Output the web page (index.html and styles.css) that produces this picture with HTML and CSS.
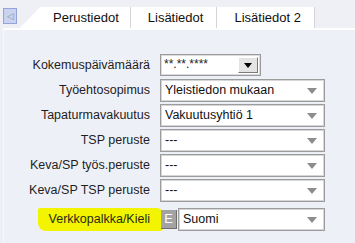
FILE: index.html
```html
<!DOCTYPE html>
<html lang="fi">
<head>
    <meta charset="UTF-8">
    <meta name="viewport" content="width=device-width, initial-scale=1.0">
    <title>Perustiedot</title>
    <link rel="stylesheet" href="styles.css">
</head>
<body>
    <div class="tab-bar">
        <div class="tab-prev">&#9665;</div>
        <div class="tab tab-first">Perustiedot</div>
        <div class="tab">Lisätiedot</div>
        <div class="tab">Lisätiedot 2</div>
    </div>

    <div class="panel">
        <div class="form-grid">
            <label>Kokemuspäivämäärä</label>
            <div class="date-input">
                <span>**.**.****</span>
                <span class="date-btn"><span class="black-arrow"></span></span>
            </div>

            <label>Työehtosopimus</label>
            <div class="select">Yleistiedon mukaan<span class="arrow"></span></div>

            <label>Tapaturmavakuutus</label>
            <div class="select">Vakuutusyhtiö 1<span class="arrow"></span></div>

            <label>TSP peruste</label>
            <div class="select">---<span class="arrow"></span></div>

            <label>Keva/SP työs.peruste</label>
            <div class="select">---<span class="arrow"></span></div>

            <label>Keva/SP TSP peruste</label>
            <div class="select">---<span class="arrow"></span></div>

            <label class="marked"><span class="highlight">Verkkopalkka/Kieli</span></label>
            <div class="control-pair">
                <span class="e-btn">E</span>
                <div class="select select-short">Suomi<span class="arrow"></span></div>
            </div>
        </div>
    </div>
</body>
</html>
```

FILE: styles.css
```css
body {
    margin: 0;
    background-color: #eef0f8;
    font-family: "Liberation Sans", Arial, sans-serif;
    font-size: 12.5px;
    color: #1e1e1e;
}

/* Välilehdet */
.tab-bar {
    display: flex;
    align-items: flex-end;
    height: 28px;
    padding-left: 3px;
    background-color: #eef0f6;
}

.tab-prev {
    width: 12px;
    height: 14px;
    margin-bottom: 4px;
    border: 1px solid #95a4d6;
    background-color: #c9d3f0;
    color: #8a8fa0;
    font-size: 9px;
    line-height: 14px;
    text-align: center;
}

.tab {
    height: 21px;
    line-height: 21px;
    padding: 0 13px 0 17px;
    background-color: #fff;
    border-right: 1px solid #d3d5da;
    color: #111;
    font-size: 13px;
}

.tab-first {
    margin-left: 3px;
    padding-left: 33px;
    padding-right: 11px;
    clip-path: polygon(0 100%, 20px 0, 100% 0, 100% 100%);
    border-right: 1px solid #c8c8c8;
}

/* Lomake */
.panel {
    border-top: 2px solid #fff;
    border-left: 1px solid #f7f8fc;
    margin-left: 3px;
    padding-top: 24px;
    height: 189px;
}

.form-grid {
    display: grid;
    grid-template-columns: 146px 165px;
    column-gap: 10px;
    row-gap: 2px;
}

.form-grid label {
    text-align: right;
    align-self: center;
    line-height: 23px;
}

.date-input {
    position: relative;
    width: 96px;
    height: 20px;
    border: 1px solid #9a9a9a;
    box-shadow: inset 0 0 0 1px #dcdcdc;
    background-color: #fff;
    padding-left: 3px;
    font-size: 12px;
    line-height: 18px;
    color: #222;
}

.date-btn {
    position: absolute;
    right: 2px;
    top: 2px;
    width: 18px;
    height: 14px;
    background-color: #e4e4e4;
    border: 1px solid;
    border-color: #fff #7a7a7a #7a7a7a #fff;
}

.black-arrow {
    position: absolute;
    left: 5px;
    top: 5px;
    border-left: 4px solid transparent;
    border-right: 4px solid transparent;
    border-top: 5px solid #000;
}

.select {
    position: relative;
    height: 21px;
    border: 1px solid #9c9c9c;
    box-shadow: inset 0 0 0 1px #d6d6d6;
    background-color: #fff;
    padding-left: 4px;
    line-height: 21px;
    color: #111;
}

.arrow {
    position: absolute;
    right: 7px;
    top: 8px;
    border-left: 5px solid transparent;
    border-right: 5px solid transparent;
    border-top: 6px solid #8c8c8c;
}

.control-pair {
    display: flex;
    align-items: center;
    margin-left: 1px;
    margin-top: 1px;
    gap: 1px;
}

.e-btn {
    width: 15px;
    height: 18px;
    margin-top: 3px;
    background-color: #a3a3a3;
    border-right: 1px solid #6e6e6e;
    border-bottom: 1px solid #6e6e6e;
    color: #fff;
    font-size: 13px;
    line-height: 18px;
    text-align: center;
}

.select-short {
    flex: 1;
    margin-top: 2px;
}

.marked {
    padding-top: 4px;
}

.highlight {
    display: inline-block;
    background-color: #f3f500;
    padding: 0 13px 0 11px;
    margin-right: -13px;
    border-radius: 2px 6px 3px 8px;
    color: #2a2a10;
}
```
